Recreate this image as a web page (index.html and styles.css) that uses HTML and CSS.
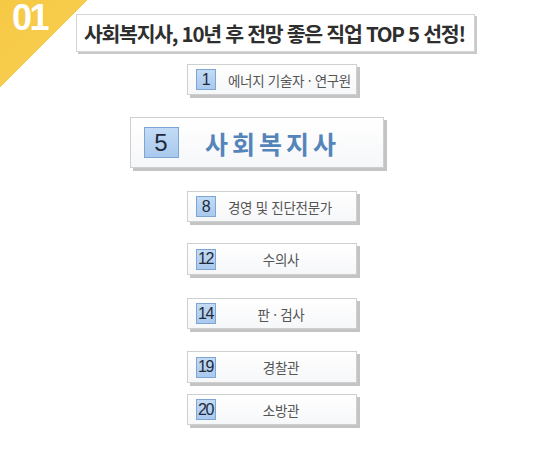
FILE: index.html
```html
<!DOCTYPE html>
<html lang="ko">
<head>
<meta charset="utf-8">
<link rel="stylesheet" href="styles.css">
</head>
<body>
<div class="page">
  <div class="corner"><span class="corner-num">01</span></div>
  <div class="title">사회복지사, 10년 후 전망 좋은 직업 TOP 5 선정!</div>
  <div class="list">
    <div class="item item-1"><span class="badge">1</span><span class="label">에너지 기술자 · 연구원</span></div>
    <div class="item item-big"><span class="badge badge-big">5</span><span class="label label-big">사회복지사</span></div>
    <div class="item item-8"><span class="badge">8</span><span class="label">경영 및 진단전문가</span></div>
    <div class="item item-12"><span class="badge">12</span><span class="label label-center">수의사</span></div>
    <div class="item item-14"><span class="badge">14</span><span class="label label-center">판 · 검사</span></div>
    <div class="item item-19"><span class="badge">19</span><span class="label label-center">경찰관</span></div>
    <div class="item item-20"><span class="badge">20</span><span class="label label-center">소방관</span></div>
  </div>
</div>
</body>
</html>
```

FILE: styles.css
```css
html, body {
  margin: 0;
  padding: 0;
  background: #ffffff;
}
body {
  font-family: "Noto Sans CJK KR", "Noto Sans", sans-serif;
  width: 550px;
  height: 462px;
  overflow: hidden;
}
.page {
  position: relative;
  width: 550px;
  height: 462px;
  padding-top: 14px;
  box-sizing: border-box;
}
.corner {
  position: absolute;
  left: 0;
  top: 0;
  width: 88px;
  height: 88px;
  background: linear-gradient(135deg, #f6c944 0%, #f7cc4c 50%, rgba(255,255,255,0) 50%);
}
.corner-num {
  position: absolute;
  left: 12px;
  top: 0;
  font-family: "Liberation Sans", Arial, sans-serif;
  font-weight: bold;
  font-size: 36px;
  letter-spacing: -2.5px;
  color: #ffffff;
  line-height: 36px;
}
.title {
  position: relative;
  margin-left: 76px;
  width: 399px;
  height: 38px;
  box-sizing: border-box;
  border: 1px solid #d4d4d4;
  background: #ffffff;
  box-shadow: 2px 2px 0 #c9c9c9;
  font-weight: bold;
  font-size: 20.5px;
  letter-spacing: -1.3px;
  color: #2e2e2e;
  line-height: 36px;
  padding-left: 7px;
  white-space: nowrap;
}
.list {
  display: flex;
  flex-direction: column;
  align-items: flex-start;
  padding-top: 12px;
}
.item {
  display: flex;
  align-items: center;
  margin-left: 187px;
  width: 170px;
  height: 31px;
  box-sizing: border-box;
  border: 1px solid #cfcfcf;
  background: linear-gradient(#ffffff, #f6f7f9);
  box-shadow: 3px 3px 0 #c4c4c4;
  padding-left: 8px;
}
.item-big {
  margin-left: 130px;
  width: 254px;
  height: 51px;
  margin-top: 22px;
  padding-left: 13px;
}
.item-8 { margin-top: 23px; }
.item-12 { margin-top: 21px; height: 32px; }
.item-14 { margin-top: 23px; }
.item-19 { margin-top: 22px; height: 32px; }
.item-20 { margin-top: 11px; }
.badge {
  display: inline-flex;
  align-items: center;
  justify-content: center;
  width: 20px;
  height: 21px;
  box-sizing: border-box;
  border: 1px solid #7ea6d4;
  background: linear-gradient(#c3dbf5, #a9c9ee);
  font-family: "Liberation Sans", Arial, sans-serif;
  font-size: 16px;
  color: #1f2a3a;
  letter-spacing: -1.5px;
  padding-right: 1px;
  flex: none;
}
.badge-big {
  width: 35px;
  height: 31px;
  font-size: 24px;
  letter-spacing: 0;
}
.label {
  margin-left: 12px;
  font-size: 13.5px;
  color: #555555;
  letter-spacing: -0.3px;
  white-space: nowrap;
}
.label-center {
  flex: 1;
  margin-left: 0;
  text-align: center;
  padding-right: 10px;
}
.label-big {
  margin-left: 26px;
  font-size: 25px;
  font-weight: bold;
  letter-spacing: 4px;
  color: #5485ba;
}
```
